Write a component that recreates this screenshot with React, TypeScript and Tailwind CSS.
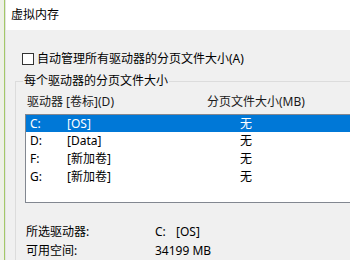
import React from "react";

const rows = [
  { d: "C:", l: "[OS]", s: "无", sel: true },
  { d: "D:", l: "[Data]", s: "无" },
  { d: "F:", l: "[新加卷]", s: "无" },
  { d: "G:", l: "[新加卷]", s: "无" },
];

export default function App() {
  return (
    <div
      className="w-[350px] h-[260px] overflow-hidden flex text-[12px] text-black"
      style={{ fontFamily: '"Noto Sans", "Noto Sans CJK SC", sans-serif' }}
    >
      <div className="w-[6px] flex shrink-0">
        <div className="w-[4px] bg-[#eef1e6]" />
        <div className="w-[1px] bg-[#a3c867]" />
        <div className="w-[1px] bg-[#e2e2e2]" />
      </div>
      <div className="flex-1 flex flex-col">
        <div className="h-[30px] bg-white pl-[5px] flex items-center leading-[16px] shrink-0">
          虚拟内存
        </div>
        <div className="flex-1 bg-[#f0f0f0] flex flex-col">
          <div className="mt-[23px] ml-[16px] flex items-center h-[12px]">
            <div className="w-[12px] h-[12px] border border-[#333] bg-white" />
            <span className="ml-[3px] leading-[16px]">自动管理所有驱动器的分页文件大小(A)</span>
          </div>
          <div className="mt-[16px] ml-[9px] flex-1 border-l border-t border-[#dcdcdc] flex flex-col">
            <div className="-mt-[9px] ml-[7px] px-[1px] bg-[#f0f0f0] w-fit leading-[16px]">
              每个驱动器的分页文件大小
            </div>
            <div className="mt-[5px] flex leading-[16px] text-[#1a1a1a]">
              <span className="ml-[11px] w-[180px]">驱动器 [卷标](D)</span>
              <span>分页文件大小(MB)</span>
            </div>
            <div className="mt-[4px] ml-[9px] h-[89px] border border-[#828790] border-r-0 bg-white flex flex-col">
              {rows.map((r) => (
                <div
                  key={r.d}
                  className={
                    "flex items-center leading-[16px] shrink-0 " +
                    (r.sel ? "h-[17px] bg-[#0078d7] text-white" : "h-[18px]")
                  }
                >
                  <span className="ml-[4px] w-[37px]">{r.d}</span>
                  <span className="w-[173px]">{r.l}</span>
                  <span>{r.s}</span>
                </div>
              ))}
            </div>
            <div className="mt-[21px] flex flex-col gap-[3px] leading-[16px]">
              <div className="flex">
                <span className="ml-[10px] w-[129px]">所选驱动器:</span>
                <span className="w-[21px]">C:</span>
                <span>[OS]</span>
              </div>
              <div className="flex">
                <span className="ml-[10px] w-[129px]">可用空间:</span>
                <span>34199 MB</span>
              </div>
            </div>
          </div>
        </div>
      </div>
    </div>
  );
}
